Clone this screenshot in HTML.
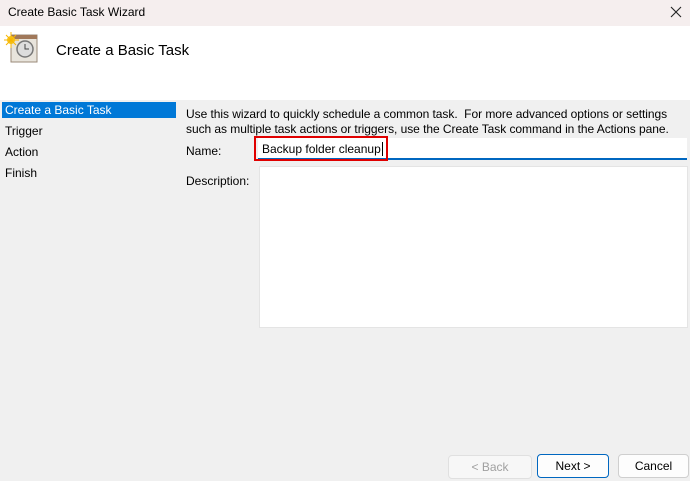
<!DOCTYPE html><html><head><style>
body{margin:0;width:690px;height:481px;background:#f0f0f0;font-family:"Liberation Sans",sans-serif;font-size:12px;color:#000;position:relative;overflow:hidden}
.a{position:absolute;white-space:nowrap}
</style></head><body>
<div class="a" style="left:0;top:0;width:690px;height:26px;background:#f5eeee"></div>
<div class="a" style="left:8px;top:5px;font-size:12px">Create Basic Task Wizard</div>
<svg class="a" style="left:670px;top:6px" width="12" height="12"><path d="M1 1L11 11M11 1L1 11" stroke="#222" stroke-width="1.1"/></svg>
<div class="a" style="left:0;top:26px;width:690px;height:74px;background:#fff"></div>
<svg class="a" style="left:4px;top:32px" width="34" height="32">
<rect x="7" y="3" width="26" height="27" fill="#e8e4dc" stroke="#9a8a78"/>
<rect x="7" y="3" width="26" height="4" fill="#a0785a"/>
<circle cx="21" cy="17" r="8" fill="#ddd" stroke="#777" stroke-width="1.5"/>
<path d="M21 12v5h4" stroke="#444" fill="none"/>
<circle cx="7" cy="8" r="4" fill="#f7c51e"/>
<path d="M7 0v16M-1 8h16M2 3l10 10M12 3L2 13" stroke="#f7b500" stroke-width="1"/>
</svg>
<div class="a" style="left:56px;top:42px;font-size:15px">Create a Basic Task</div>
<div class="a" style="left:2px;top:102px;width:174px;height:16px;background:#0078d7"></div>
<div class="a" style="left:5px;top:103px;color:#fff">Create a Basic Task</div>
<div class="a" style="left:5px;top:124px">Trigger</div>
<div class="a" style="left:5px;top:145px">Action</div>
<div class="a" style="left:5px;top:166px">Finish</div>
<div class="a" style="left:186px;top:107px;line-height:15px;letter-spacing:-0.05px">Use this wizard to quickly schedule a common task.&nbsp; For more advanced options or settings<br>such as multiple task actions or triggers, use the Create Task command in the Actions pane.</div>
<div class="a" style="left:186px;top:144px">Name:</div>
<div class="a" style="left:186px;top:174px">Description:</div>
<div class="a" style="left:258px;top:138px;width:429px;height:20px;background:#fff;border-bottom:2px solid #0067c0"></div>
<div class="a" style="left:254px;top:136px;width:130px;height:21px;border:2px solid #e00000"></div>
<div class="a" style="left:262px;top:142px">Backup folder cleanup<span style="border-left:1px solid #000;margin-left:1px"></span></div>
<div class="a" style="left:259px;top:166px;width:427px;height:160px;background:#fff;border:1px solid #e4e4e4"></div>
<div class="a" style="left:448px;top:455px;width:82px;height:22px;border:1px solid #e0e0e0;border-radius:4px;background:#f7f7f7;color:#a0a0a0;text-align:center;line-height:22px">&lt; Back</div>
<div class="a" style="left:537px;top:454px;width:70px;height:22px;border:1px solid #0067c0;border-radius:4px;background:#fdfdfd;text-align:center;line-height:22px">Next &gt;</div>
<div class="a" style="left:618px;top:454px;width:69px;height:22px;border:1px solid #cfcfcf;border-radius:4px;background:#fdfdfd;text-align:center;line-height:22px">Cancel</div>
</body></html>
